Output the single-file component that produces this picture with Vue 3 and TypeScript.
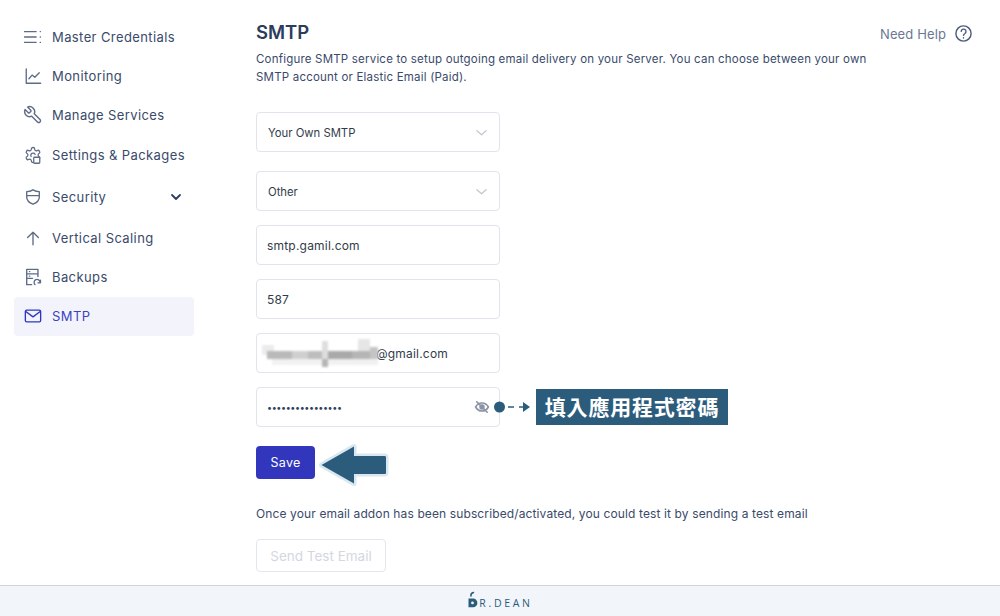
<script setup lang="ts">
const pix: [number, number, number, number, string][] = [
  [0, 6, 12, 10, '#ececec'], [5, 12, 26, 8, '#b9b9b9'], [30, 12, 16, 8, '#cfcfcf'], [46, 12, 14, 8, '#bdbdbd'],
  [60, 2, 6, 26, '#dedede'], [60, 20, 6, 8, '#b5b5b5'], [66, 12, 24, 8, '#a9a9a9'], [90, 12, 18, 8, '#b5b5b5'],
  [96, 0, 12, 12, '#e6e6e6'], [108, 8, 8, 14, '#c4c4c4'], [10, 20, 50, 6, '#f2f2f2'], [66, 20, 50, 6, '#f1f1f1'],
]
</script>

<template>
  <div class="page">
    <div class="body">
      <aside class="side">
        <a class="nav">
          <svg class="ic" viewBox="0 0 20 20"><path d="M.5 4h13M.5 10h13M.5 16h13M18 4h.3M18 10h.3M18 16h.3" /></svg>
          <span>Master Credentials</span>
        </a>
        <a class="nav">
          <svg class="ic" viewBox="0 0 20 20"><path d="M2.500 2v16h16M5.500 13l3.500-4 3 2.500 5-5" /></svg>
          <span>Monitoring</span>
        </a>
        <a class="nav">
          <svg class="ic wrench" viewBox="0 0 24 24"><path transform="matrix(-1 0 0 1 24 0)" d="M14.700 6.300a1 1 0 0 0 0 1.400l1.600 1.600a1 1 0 0 0 1.400 0l3.770-3.770a6 6 0 0 1-7.940 7.940l-6.910 6.910a2.120 2.120 0 0 1-3-3l6.910-6.910a6 6 0 0 1 7.940-7.940l-3.760 3.760z" /></svg>
          <span>Manage Services</span>
        </a>
        <a class="nav nav-set">
          <svg class="ic gear" viewBox="0 0 24 24"><path d="M12.220 2h-.44a2 2 0 0 0-2 2v.18a2 2 0 0 1-1 1.730l-.43.25a2 2 0 0 1-2 0l-.15-.08a2 2 0 0 0-2.730.73l-.22.38a2 2 0 0 0 .73 2.730l.15.1a2 2 0 0 1 1 1.720v.51a2 2 0 0 1-1 1.740l-.15.09a2 2 0 0 0-.73 2.730l.22.38a2 2 0 0 0 2.730.73l.15-.08a2 2 0 0 1 2 0l.43.25a2 2 0 0 1 1 1.730V20a2 2 0 0 0 2 2h.44a2 2 0 0 0 2-2v-.18a2 2 0 0 1 1-1.730l.43-.25a2 2 0 0 1 2 0l.15.08a2 2 0 0 0 2.730-.73l.22-.39a2 2 0 0 0-.73-2.730l-.15-.08a2 2 0 0 1-1-1.740v-.5a2 2 0 0 1 1-1.740l.15-.09a2 2 0 0 0 .73-2.730l-.22-.38a2 2 0 0 0-2.730-.73l-.15.08a2 2 0 0 1-2 0l-.43-.25a2 2 0 0 1-1-1.730V4a2 2 0 0 0-2-2z" /><path d="M9.500 14a3 3 0 1 1 5.300-2.800" /><rect class="gear-sq" x="13" y="15" width="8" height="8" rx="1" /></svg>
          <span>Settings &amp; Packages</span>
        </a>
        <a class="nav nav-sec">
          <svg class="ic" viewBox="0 0 20 20"><path d="M10 2c2.500 1.500 4.500 2 7 2v6c0 4-3 6.500-7 8-4-1.500-7-4-7-8V4c2.500 0 4.500-.5 7-2zM3.500 8.500h13" /></svg>
          <span class="grow">Security</span>
          <svg class="caret" viewBox="0 0 12 12"><path d="M2 4l4 4 4-4" /></svg>
        </a>
        <a class="nav nav-vs">
          <svg class="ic" viewBox="0 0 20 20"><path d="M10 17.500V3.500M4 9.500l6-6 6 6" /></svg>
          <span>Vertical Scaling</span>
        </a>
        <a class="nav">
          <svg class="ic" viewBox="0 0 20 20"><path d="M8.500 18.500H3V1.500h12.500v8M3 6.500h12.500M3 11.500h6.500M6 4h.5M6 9h.5" /><path d="M12.300 18.500a3.300 3.300 0 1 1 5.500-2.500M18.300 13.500v3h-2.800" /></svg>
          <span>Backups</span>
        </a>
        <a class="nav active">
          <svg class="ic" viewBox="0 0 20 20"><rect x="1.500" y="3.500" width="17" height="13" rx="1.500" /><path d="M2 5l8 6 8-6" /></svg>
          <span>SMTP</span>
        </a>
      </aside>

      <main class="main">
        <div class="head">
          <div class="intro">
            <h1>SMTP</h1>
            <p class="desc">Configure SMTP service to setup outgoing email delivery on your Server. You can choose between your own SMTP account or Elastic Email (Paid).</p>
          </div>
          <div class="help">
            <span>Need Help</span>
            <svg class="help-ic" viewBox="0 0 20 20"><circle cx="10" cy="10" r="8" /><path d="M7.600 7.800A2.500 2.500 0 1 1 11.500 10c-1 .6-1.500 1-1.500 2" /><path d="M10 14.500v.3" /></svg>
          </div>
        </div>

        <div class="form">
          <div class="field sel first"><span>Your Own SMTP</span><svg class="chev" viewBox="0 0 12 8"><path d="M1 1.500l5 4.500 5-4.500" /></svg></div>
          <div class="field sel second"><span>Other</span><svg class="chev" viewBox="0 0 12 8"><path d="M1 1.500l5 4.500 5-4.500" /></svg></div>
          <div class="field val">smtp.gamil.com</div>
          <div class="field val">587</div>
          <div class="field val mail">
            <span class="blur"><i v-for="(p, i) in pix" :key="i" :style="{ left: p[0] + 'px', top: p[1] + 'px', width: p[2] + 'px', height: p[3] + 'px', background: p[4] }"></i></span>
            <span>@gmail.com</span>
          </div>
          <div class="field val pass">
            <span class="dots">••••••••••••••••</span>
            <svg class="eye" viewBox="0 0 20 20"><path d="M2 10c2-3.500 4.800-5 8-5s6 1.500 8 5c-2 3.500-4.800 5-8 5s-6-1.500-8-5z" /><circle class="pupil" cx="10" cy="10" r="2.400" /><path class="slash" d="M3.500 3.500l13 13" /></svg>
            <div class="note">
              <svg class="note-line" viewBox="0 0 36 12"><circle cx="5.500" cy="6" r="5.500" /><path class="dash" d="M14 6h6M25 6h5" /><path d="M29 1l7 5-7 5z" /></svg>
              <span class="label">填入應用程式密碼</span>
            </div>
          </div>
          <div class="save-row">
            <button class="save">Save</button>
            <svg class="big-arrow" viewBox="0 0 70 44"><path d="M2.500 22 35 3.500V13h30.500c1 0 1.500.5 1.500 1.500v15c0 1-.5 1.500-1.500 1.500H35v9.500z" /></svg>
          </div>
          <p class="hint">Once your email addon has been subscribed/activated, you could test it by sending a test email</p>
          <button class="test">Send Test Email</button>
        </div>
      </main>
    </div>

    <footer class="foot">
      <svg class="logo" viewBox="0 0 12 18"><path class="logo-arc" d="M4 5c-.5-2 .5-3 2.500-3.500" /><path class="logo-d" d="M1.500 7.500H6a4.300 4.300 0 0 1 0 8.800H1.500z" /><circle class="logo-hole" cx="5.500" cy="11.900" r="1.400" /></svg>
      <span class="brand">R.DEAN</span>
    </footer>
  </div>
</template>

<style>
html, body { margin: 0; background: #fff; }
</style>

<style scoped>
.page {
  width: 1000px;
  height: 616px;
  display: flex;
  flex-direction: column;
  overflow: hidden;
  font-family: Inter, "Noto Sans", sans-serif;
  color: #2f3f5f;
}
.body { flex: 1; display: flex; min-height: 0; }
.side { width: 180px; margin-left: 14px; padding-top: 17px; flex: none; }
.nav {
  height: 39px;
  display: flex;
  align-items: center;
  gap: 10px;
  padding-left: 10px;
  padding-right: 12px;
  border-radius: 4px;
  font-size: 13px;
  letter-spacing: 0.4px;
  color: #3a4a6b;
  white-space: nowrap;
}
.nav-set { margin-top: 1px; }
.nav-sec { margin-top: 3px; }
.nav-vs { margin-top: 2px; }
.active { margin-top: 1px; padding-bottom: 1px; box-sizing: border-box; background: #f3f4fb; color: #3b43c0; }
.grow { flex: 1; }
.ic { width: 18px; height: 18px; flex: none; fill: none; stroke: #5f6c86; stroke-width: 1.500; stroke-linecap: round; stroke-linejoin: round; }
.wrench, .gear { stroke-width: 1.700; }
.wrench { width: 20px; height: 20px; margin: 0 -1px; }
.gear-sq { fill: #fff; stroke: #5f6c86; }
.active .ic { stroke: #2f37bf; }
.caret { width: 12px; height: 12px; fill: none; stroke: #2f3f5f; stroke-width: 1.800; stroke-linecap: round; stroke-linejoin: round; }
.main { flex: 1; margin-left: 62px; padding-right: 27px; min-width: 0; }
.head { display: flex; justify-content: space-between; align-items: flex-start; padding-top: 19px; }
.intro { width: 625px; }
h1 { margin: 0; font-size: 18.500px; line-height: 27px; font-weight: 600; color: #2c3d5c; }
.desc { margin: 4px 0 0; font-size: 11.500px; line-height: 18px; letter-spacing: 0.200px; color: #3a4a6b; }
.help { display: flex; align-items: center; gap: 8px; margin-top: 5px; font-size: 13px; letter-spacing: 0.120px; color: #6b7892; white-space: nowrap; }
.help-ic { width: 19px; height: 19px; fill: none; stroke: #4f5d7c; stroke-width: 1.500; stroke-linecap: round; }
.form { width: 244px; margin-top: 26px; display: flex; flex-direction: column; }
.field {
  box-sizing: border-box;
  width: 244px;
  height: 40px;
  border: 1px solid #e1e4ec;
  border-radius: 4px;
  display: flex;
  align-items: center;
  font-size: 11.300px;
  color: #333b4a;
  background: #fff;
  position: relative;
}
.sel { padding: 1px 12px 0 11px; justify-content: space-between; }
.chev { width: 11px; height: 8px; fill: none; stroke: #c5c9d3; stroke-width: 1.500; stroke-linecap: round; stroke-linejoin: round; }
.second { margin-top: 19px; }
.val { padding: 0 10px; margin-top: 14px; font-size: 12px; letter-spacing: 0.200px; }
.mail { padding-left: 5px; }
.blur { position: relative; width: 114px; height: 28px; flex: none; filter: blur(1px); }
.blur i { position: absolute; display: block; }
.pass { padding-right: 10px; justify-content: space-between; }
.dots { font-size: 9px; letter-spacing: -0.400px; color: #2f3f5f; }
.eye { width: 16px; height: 16px; fill: none; stroke: #8b93a5; stroke-width: 2; stroke-linecap: round; stroke-linejoin: round; margin-right: -1px; }
.eye .pupil { fill: #8b93a5; }
.eye .slash { stroke: #8b93a5; stroke-width: 2; }
.note { position: absolute; left: 237px; top: 1px; display: flex; align-items: center; gap: 6px; }
.note-line { width: 36px; height: 12px; fill: #2c5c7c; flex: none; }
.note-line .dash { stroke: #2c5c7c; stroke-width: 1.600; fill: none; }
.label {
  box-sizing: border-box;
  width: 192px;
  height: 36px;
  padding-bottom: 3px;
  background: #2c5c7c;
  color: #fff;
  font-family: "Noto Sans CJK TC", "Noto Sans", sans-serif;
  font-weight: 700;
  font-size: 21px;
  letter-spacing: 0.800px;
  display: flex;
  align-items: center;
  justify-content: center;
  white-space: nowrap;
}
.save-row { margin-top: 19px; position: relative; height: 33px; }
.save {
  width: 59px;
  height: 33px;
  border: none;
  border-radius: 4px;
  background: #3136bd;
  color: #fff;
  font-family: inherit;
  font-size: 12.500px;
  font-weight: 400;
  letter-spacing: 0.300px;
  padding: 0;
}
.big-arrow {
  position: absolute;
  left: 63px;
  top: -3px;
  width: 70px;
  height: 44px;
  overflow: visible;
  fill: #2c5c7c;
  stroke: #d9e8f0;
  stroke-width: 5;
  stroke-linejoin: round;
  paint-order: stroke;
}
.hint { margin: 27px 0 0; width: 640px; font-size: 12px; line-height: 16px; letter-spacing: 0.120px; color: #3a4a6b; white-space: nowrap; }
.test {
  margin-top: 17px;
  width: 130px;
  height: 33px;
  border: 1px solid #e4e6ee;
  border-radius: 4px;
  background: #fff;
  color: #d3d7e2;
  font-family: inherit;
  font-size: 13.500px;
  padding: 0;
}
.foot {
  height: 31px;
  flex: none;
  box-sizing: border-box;
  border-top: 1px solid #ccd3dc;
  background: #f2f5f9;
  display: flex;
  align-items: center;
  justify-content: center;
  gap: 0;
}
.logo { width: 12px; height: 18px; margin-top: -3px; }
.logo-arc { fill: none; stroke: #2c5c7c; stroke-width: 1.500; stroke-linecap: round; }
.logo-d { fill: #2c5c7c; }
.logo-hole { fill: #f2f5f9; }
.brand { font-size: 10.500px; font-weight: 500; letter-spacing: 2.700px; color: #2c5c7c; margin-top: 3px; font-family: "Open Sans", sans-serif; }
</style>
